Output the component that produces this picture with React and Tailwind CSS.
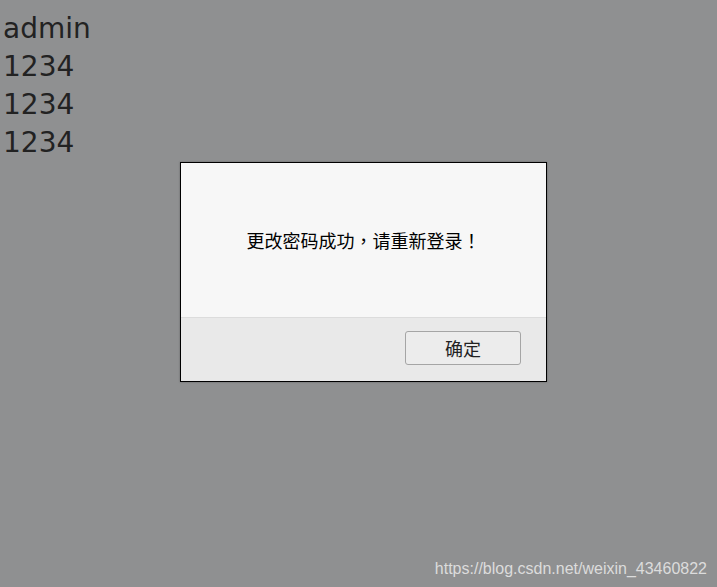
import React from 'react'

export default function App() {
  const lines = ['admin', '1234', '1234', '1234']

  return (
    <div className="relative w-[717px] h-[587px] overflow-hidden bg-[#8f9091] font-['DejaVu_Sans',sans-serif]">
      {/* Page content */}
      <div className="pt-[10px] pl-[3px] text-[28px] leading-[38px] text-[#222]">
        {lines.map((line, i) => (
          <div key={i}>{line}</div>
        ))}
      </div>

      {/* Alert dialog */}
      <div className="absolute left-[180px] top-[162px] w-[367px] h-[220px] flex flex-col border border-black bg-[#f7f7f7] shadow-[0_0_2px_rgba(0,0,0,0.3)]">
        <div className="flex-1 flex items-center justify-center text-[18px] text-black font-['Noto_Sans_CJK_TC',sans-serif]">
          更改密码成功，请重新登录！
        </div>
        <div className="h-[64px] flex items-start justify-end pt-[13px] pr-[25px] border-t border-[#dcdcdc] bg-[#e9e9e9]">
          <button className="w-[116px] h-[34px] rounded-[3px] border border-[#a5a5a5] bg-[#ececec] text-[18px] leading-none text-[#222] font-['Noto_Sans_CJK_SC',sans-serif]">
            确定
          </button>
        </div>
      </div>

      {/* Watermark */}
      <div className="absolute right-[10px] bottom-[6px] text-[16px] text-[#dcdcdc] font-['Liberation_Sans',sans-serif]">
        https://blog.csdn.net/weixin_43460822
      </div>
    </div>
  )
}
